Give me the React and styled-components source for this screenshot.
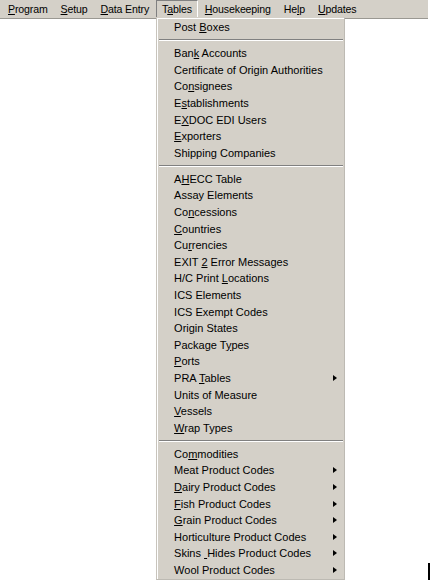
import React from "react";
import styled, { createGlobalStyle } from "styled-components";

const GlobalStyle = createGlobalStyle`
  html, body {
    margin: 0;
    padding: 0;
    background: #ffffff;
  }
  body {
    width: 432px;
    height: 580px;
    overflow: hidden;
    font-family: "Liberation Sans", Arial, sans-serif;
    font-size: 11px;
    color: #000000;
  }
`;

const topMenus = ["&Program", "&Setup", "&Data Entry", "T&ables", "&Housekeeping", "He&lp", "&Updates"];

const tableItems = [
  "Post &Boxes",
  "-",
  "Ban&k Accounts",
  "Certificate of Origin Authorities",
  "Co&nsignees",
  "E&stablishments",
  "E&XDOC EDI Users",
  "&Exporters",
  "Shipping Companies",
  "-",
  "A&HECC Table",
  "Assay Elements",
  "Co&ncessions",
  "&Countries",
  "Cu&rrencies",
  "EXIT &2 Error Messages",
  "H/C Print &Locations",
  "ICS Elements",
  "ICS Exempt Codes",
  "Origin States",
  "Package T&ypes",
  "&Ports",
  "PRA &Tables>",
  "Units of Measure",
  "&Vessels",
  "&Wrap Types",
  "-",
  "Co&mmodities",
  "Meat Product Codes>",
  "&Dairy Product Codes>",
  "&Fish Product Codes>",
  "&Grain Product Codes>",
  "Horticulture Product Codes>",
  "Skins & Hides Product Codes>",
  "Wool Product Codes>",
];

// "&x" underlines x, the Windows mnemonic way
function Label({ text }) {
  const i = text.indexOf("&");
  if (i < 0) return <>{text}</>;
  const ch = text[i + 1] === " " ? "\u00a0" : text[i + 1];
  return (
    <>
      {text.slice(0, i)}
      <Mnemonic>{ch}</Mnemonic>
      {text.slice(i + 2)}
    </>
  );
}

export default function App() {
  return (
    <>
      <GlobalStyle />
      <Screen>
        <MenuBar>
          {topMenus.map((m) => {
            const open = m === "T&ables";
            return (
              <BarItem key={m} $open={open}>
                <BarText>
                  <Label text={m} />
                </BarText>
                {open && (
                  <Dropdown>
                    {tableItems.map((it, idx) => {
                      if (it === "-") return <Separator key={idx} />;
                      const sub = it.endsWith(">");
                      const text = sub ? it.slice(0, -1) : it;
                      return (
                        <Item key={idx}>
                          <ItemText>
                            <Label text={text} />
                          </ItemText>
                          {sub && <Arrow />}
                        </Item>
                      );
                    })}
                  </Dropdown>
                )}
              </BarItem>
            );
          })}
        </MenuBar>
        <Caret />
      </Screen>
    </>
  );
}

const Screen = styled.div`
  position: relative;
  width: 432px;
  height: 580px;
`;

const MenuBar = styled.div`
  width: 426px;
  height: 18px;
  background: #d4d0c8;
  border-bottom: 1px solid #9a9892;
  display: flex;
  align-items: stretch;
  padding-left: 1.5px;
  box-sizing: content-box;
`;

const BarItem = styled.div`
  position: relative;
  display: flex;
  align-items: center;
  padding: 0 5.5px;
  white-space: nowrap;
  box-sizing: border-box;
  border: 1px solid transparent;
  border-color: ${(p) => (p.$open ? "#808080 #ffffff #ffffff #808080" : "transparent")};
`;

const BarText = styled.span`
  font-size: 10.6px;
  letter-spacing: -0.15px;
  line-height: 16px;
`;

const Mnemonic = styled.span`
  text-decoration: underline;
  text-underline-offset: 1px;
`;

const Dropdown = styled.div`
  position: absolute;
  top: 16px;
  left: -1px;
  width: 189px;
  box-sizing: border-box;
  background: #d4d0c8;
  border-left: 1px solid #c8c4bc;
  border-top: 1px solid #d4d0c8;
  border-right: 1px solid #bdbab3;
  border-bottom: 1px solid #bdbab3;
  box-shadow: inset 1px 1px 0 #ffffff;
  padding: 1px 0 1px 0;
  z-index: 10;
  letter-spacing: 0;
`;

const Item = styled.div`
  height: 16.6px;
  display: flex;
  align-items: center;
  padding: 0 7px 0 17.5px;
  white-space: nowrap;
`;

const ItemText = styled.span`
  flex: 1;
  line-height: 16px;
`;

const Arrow = styled.span`
  width: 0;
  height: 0;
  border-top: 3.5px solid transparent;
  border-bottom: 3.5px solid transparent;
  border-left: 4px solid #000000;
`;

const Separator = styled.div`
  height: 9.4px;
  display: flex;
  flex-direction: column;
  justify-content: center;
  padding: 0 1px 0 2px;
  &::before {
    content: "";
    display: block;
    height: 1px;
    background: #808080;
  }
  &::after {
    content: "";
    display: block;
    height: 1px;
    background: #ffffff;
  }
`;

const Caret = styled.div`
  position: absolute;
  left: 428px;
  top: 563px;
  width: 2px;
  height: 17px;
  background: #000000;
`;
